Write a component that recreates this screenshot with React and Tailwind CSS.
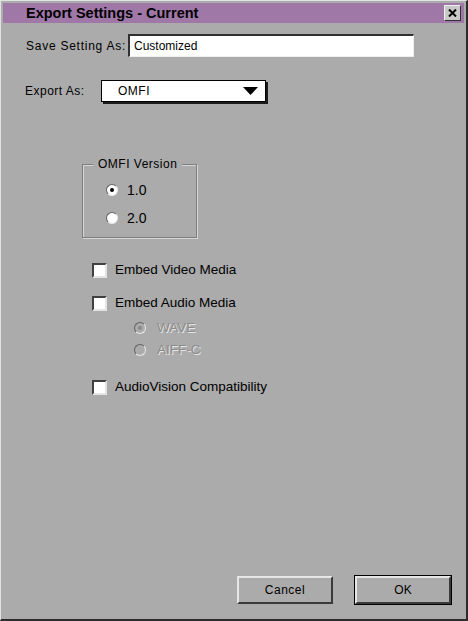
import React from 'react'

const font = "font-['Liberation_Sans',Arial,sans-serif]"

function Radio({ checked, disabled }) {
  return (
    <span
      className={`relative inline-flex items-center justify-center w-[12px] h-[12px] rounded-full border border-t-[#606060] border-l-[#606060] border-b-[#e8e8e8] border-r-[#e8e8e8] ${
        disabled ? 'bg-[#ababab]' : 'bg-white'
      }`}
    >
      {checked && (
        <span className={`w-[4px] h-[4px] rounded-full ${disabled ? 'bg-[#8a8a8a]' : 'bg-black'}`} />
      )}
    </span>
  )
}

function Checkbox() {
  return (
    <span className="inline-block w-[15px] h-[15px] bg-white border-2 border-t-[#404040] border-l-[#404040] border-b-[#e4e4e4] border-r-[#e4e4e4]" />
  )
}

function CheckRow({ label, className = '' }) {
  return (
    <div className={`flex items-center h-[20px] ml-[89px] ${className}`}>
      <Checkbox />
      <span className="ml-[8px] text-[13.5px]">{label}</span>
    </div>
  )
}

function DisabledRadio({ label, checked, className = '' }) {
  return (
    <div className={`flex items-center h-[20px] ml-[131px] ${className}`}>
      <Radio checked={checked} disabled />
      <span className="ml-[11px] text-[13.5px] text-[#8c8c8c] [text-shadow:1px_1px_0_#e6e6e6]">{label}</span>
    </div>
  )
}

export default function App() {
  return (
    <div
      className={`w-[468px] h-[621px] bg-[#ababab] text-black ${font} flex flex-col p-[2px] border-t border-l border-t-[#e2e2e2] border-l-[#e2e2e2] border-r-2 border-b-2 border-r-[#2c2c2c] border-b-[#2c2c2c]`}
    >
      {/* Title bar */}
      <div className="h-[20px] bg-[#a078a8] flex items-center pl-[23px] pr-[3px]">
        <span className="flex-1 font-bold text-[14.5px] leading-none">Export Settings - Current</span>
        <button className="w-[17px] h-[16px] bg-[#c8c8c8] flex items-center justify-center border border-t-[#f0f0f0] border-l-[#f0f0f0] border-b-[#303030] border-r-[#303030]">
          <svg width="9" height="8" viewBox="0 0 9 8">
            <path d="M1 0.5 L8 7.5 M8 0.5 L1 7.5" stroke="#000" strokeWidth="2" />
          </svg>
        </button>
      </div>

      {/* Body */}
      <div className="flex-1 flex flex-col">
        <div className="flex items-center mt-[11px] ml-[23px]">
          <span className="text-[12px] tracking-[0.75px] w-[102px] whitespace-nowrap">Save Setting As:</span>
          <div className="w-[286px] h-[23px] bg-white flex items-center pl-[4px] border-2 border-t-[#303030] border-l-[#303030] border-b-[#efefef] border-r-[#efefef] border-b border-r">
            <span className="text-[12px]">Customized</span>
          </div>
        </div>

        <div className="flex items-center mt-[23px] ml-[22px]">
          <span className="text-[12px] tracking-[0.5px] w-[76px]">Export As:</span>
          <div className="w-[165px] h-[22px] bg-white border border-black shadow-[2px_2px_0_#1a1a1a] flex items-center pl-[16px] pr-[7px]">
            <span className="flex-1 text-[12px] tracking-[0.5px]">OMFI</span>
            <svg width="15" height="8" viewBox="0 0 15 8">
              <path d="M0 0 H15 L7.5 8 Z" fill="#000" />
            </svg>
          </div>
        </div>

        <fieldset className="mt-[55px] ml-[79px] w-[115px] pb-[9px] pl-[23px] border border-[#7e7e7e] shadow-[1px_1px_0_#d6d6d6,inset_1px_1px_0_#d6d6d6]">
          <legend className="ml-[-13px] px-[5px] bg-[#ababab] text-[12px] tracking-[0.5px] leading-[14px] whitespace-nowrap">
            OMFI Version
          </legend>
          <div className="flex items-center h-[20px] mt-[9px]">
            <Radio checked />
            <span className="ml-[9px] text-[14px]">1.0</span>
          </div>
          <div className="flex items-center h-[20px] mt-[8px]">
            <Radio />
            <span className="ml-[9px] text-[14px]">2.0</span>
          </div>
        </fieldset>

        <CheckRow label="Embed Video Media" className="mt-[22px]" />
        <CheckRow label="Embed Audio Media" className="mt-[13px]" />
        <DisabledRadio label="WAVE" checked className="mt-[5px]" />
        <DisabledRadio label="AIFF-C" className="mt-[2px]" />
        <CheckRow label="AudioVision Compatibility" className="mt-[17px]" />
      </div>

      {/* Buttons */}
      <div className="flex items-center justify-end gap-[21px] pr-[12px] pb-[12px]">
        <button className="w-[96px] h-[28px] bg-[#ababab] text-[12px] tracking-[0.5px] border-2 border-t-[#e6e6e6] border-l-[#e6e6e6] border-b-[#3a3a3a] border-r-[#3a3a3a]">
          Cancel
        </button>
        <button className="w-[98px] h-[30px] border border-black">
          <div className="w-full h-full bg-[#ababab] flex items-center justify-center text-[12px] border-2 border-t-[#e6e6e6] border-l-[#e6e6e6] border-b-[#3a3a3a] border-r-[#3a3a3a]">
            OK
          </div>
        </button>
      </div>
    </div>
  )
}
